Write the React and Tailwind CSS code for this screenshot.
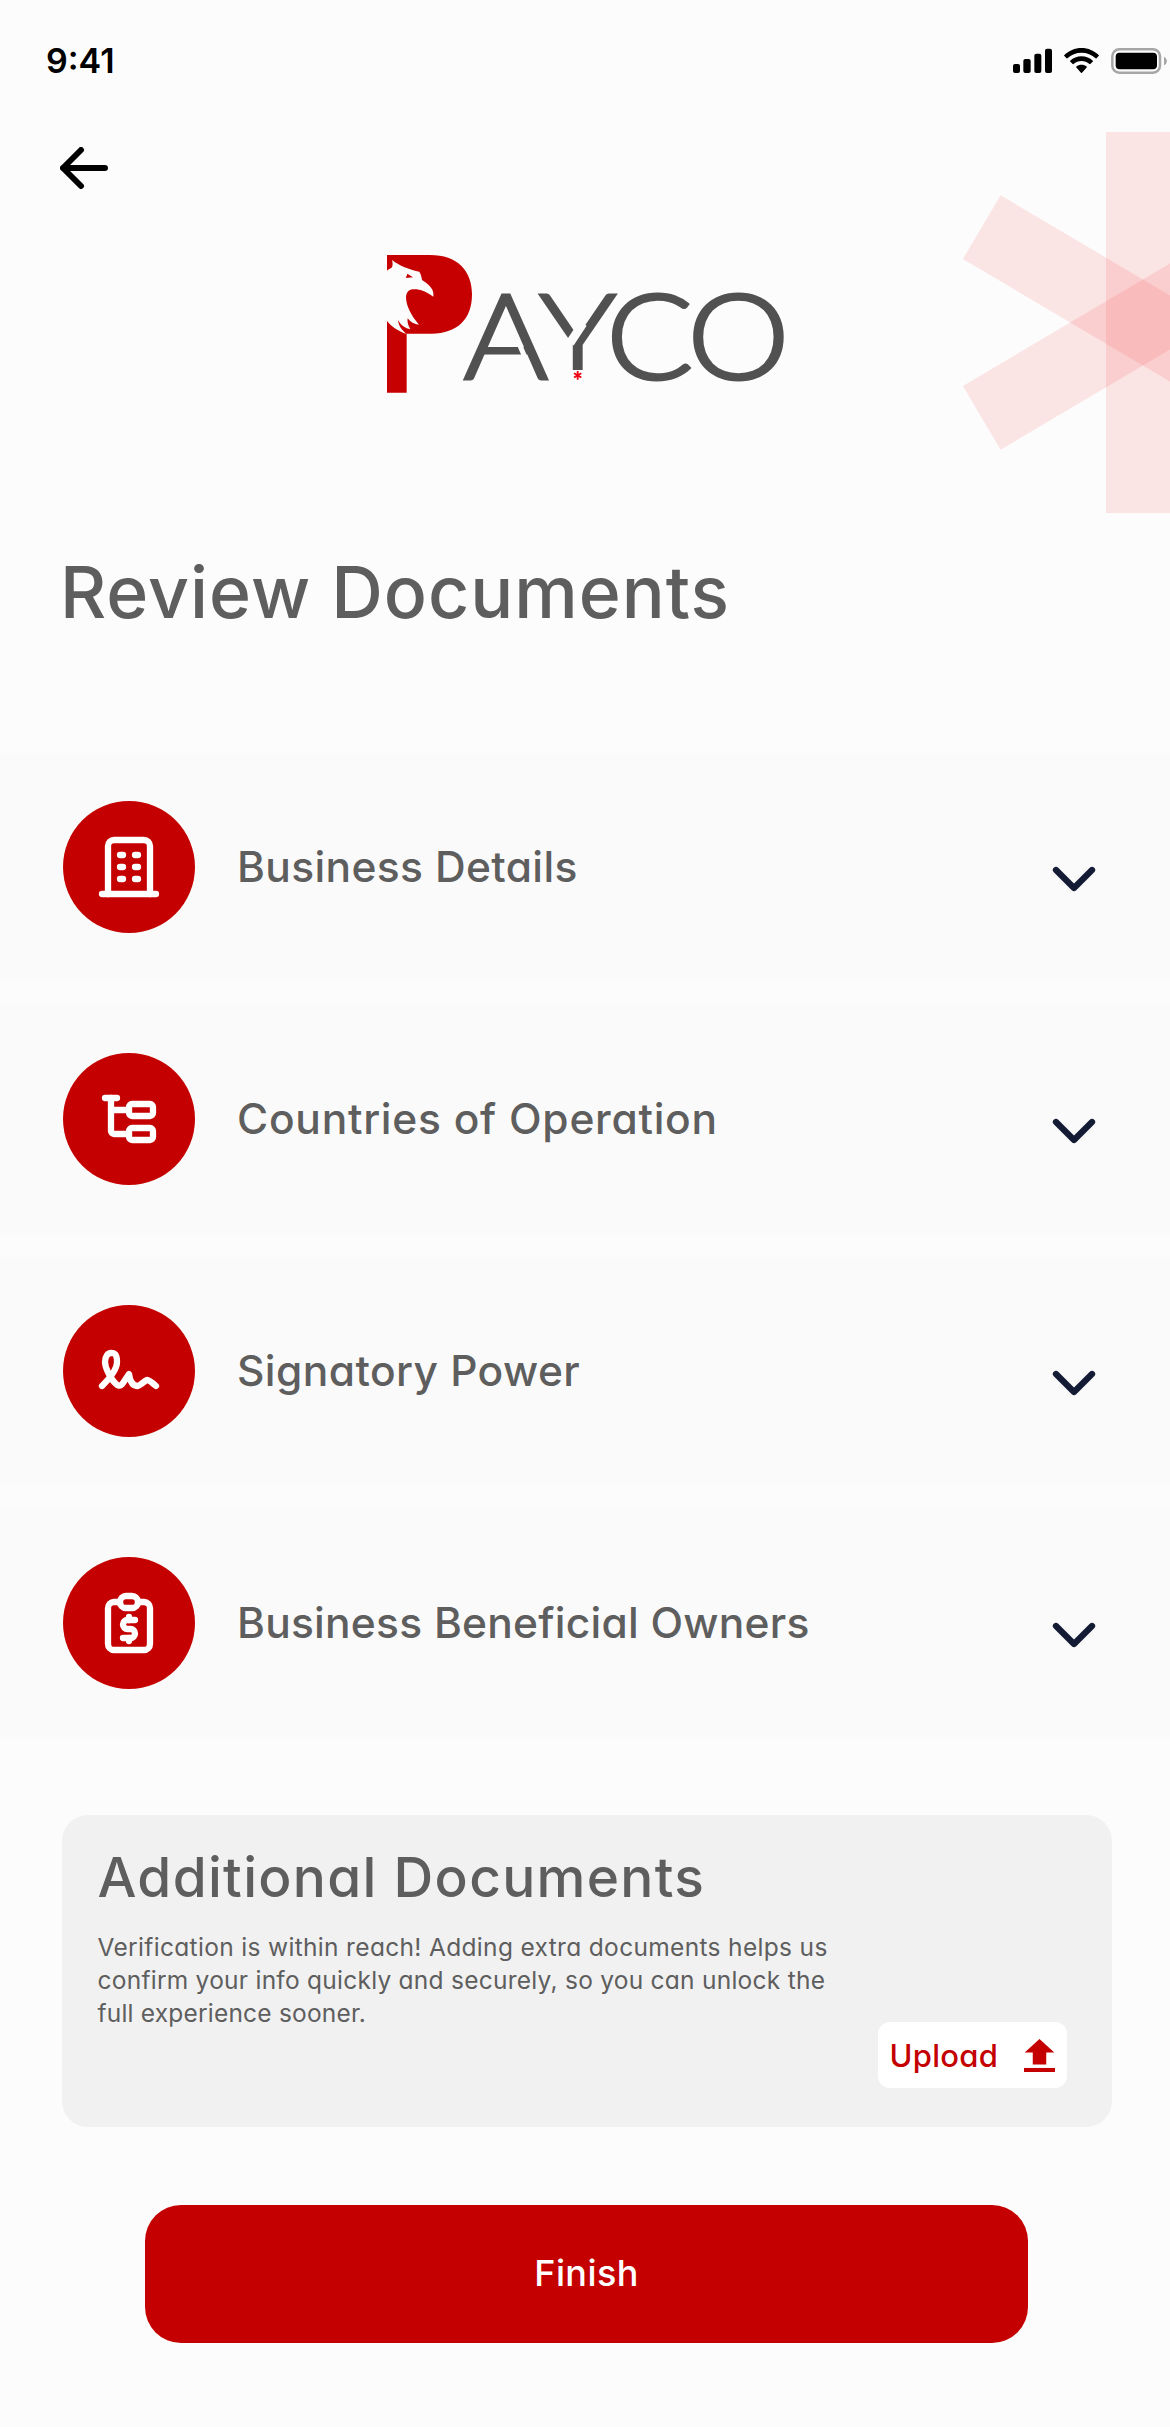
import React from 'react';

const iconProps = {
  viewBox: '0 0 24 24',
  fill: 'none',
  stroke: 'currentColor',
  strokeWidth: 2.1,
  strokeLinecap: 'round',
  strokeLinejoin: 'round',
  className: 'size-[72px]',
};

const BuildingIcon = () => (
  <svg {...iconProps}>
    <path d="M3 21h18" />
    <path d="M5 21V5a2 2 0 0 1 2-2h10a2 2 0 0 1 2 2v16" />
    <path d="M9 8h1M9 12h1M9 16h1M14 8h1M14 12h1M14 16h1" />
  </svg>
);

const TreeIcon = () => (
  <svg {...iconProps}>
    <path d="M4 5h4" />
    <path d="M6 5v11a1 1 0 0 0 1 1h5" />
    <path d="M6 9h6" />
    <rect x="12" y="7" width="8" height="4" rx="1" />
    <rect x="12" y="15" width="8" height="4" rx="1" />
  </svg>
);

const SignatureIcon = () => (
  <svg {...iconProps}>
    <path d="M3 17c3.333-3.333 5-6 5-8c0-3-1-3-2-3s-2.032 1.085-2 3c.034 2.048 1.658 4.877 2.5 6c1.5 2 2.5 2.5 3.5 1l2-3c.333 2.667 1.333 4 3 4c.53 0 2.639-2 3-2c.517 0 1.517.667 3 2" />
  </svg>
);

const ClipboardDollarIcon = () => (
  <svg {...iconProps}>
    <path d="M9 5H7a2 2 0 0 0-2 2v12a2 2 0 0 0 2 2h10a2 2 0 0 0 2-2V7a2 2 0 0 0-2-2h-2" />
    <rect x="9" y="3" width="6" height="4" rx="2" />
    <path d="M14 11h-2.5a1.5 1.5 0 0 0 0 3h1a1.5 1.5 0 0 1 0 3H10" />
    <path d="M12 17v1m0-8v1" />
  </svg>
);

const sections = [
  { title: 'Business Details', icon: BuildingIcon, tracking: 'tracking-[0.36px]' },
  { title: 'Countries of Operation', icon: TreeIcon, tracking: 'tracking-[0.74px]' },
  { title: 'Signatory Power', icon: SignatureIcon, tracking: 'tracking-[0.42px]' },
  { title: 'Business Beneficial Owners', icon: ClipboardDollarIcon, tracking: 'tracking-[0.24px]' },
];

const StatusBar = () => (
  <div className="flex h-[120px] items-center justify-between pl-[46px] pr-[3px]">
    <span className="pt-[1px] text-[34px] font-semibold leading-none text-black">9:41</span>
    <div className="flex items-center gap-[12px] pt-[2px]">
      {/* Signal */}
      <svg viewBox="162 84 117 78" className="h-[26px] w-[39px]">
        <rect x="162" y="132" width="21" height="27" rx="6" />
        <rect x="193" y="117" width="22" height="42" rx="6" />
        <rect x="226" y="101" width="21" height="58" rx="6" />
        <rect x="258" y="86" width="21" height="73" rx="6" />
      </svg>
      {/* Wifi */}
      <svg viewBox="314 84 105 78" className="h-[26px] w-[35px]">
        <path d="M366.500 84c20 0 38 8 52 21.500q1 1 0 2l-7 7.500q-1.500 1-2.500 0c-12-11-26-17-42.500-17s-30.500 6-42.500 17q-1 1-2.500 0l-7-7.500q-1-1 0-2c14-13.500 32-21.500 52-21.500z" />
        <path d="M366.500 109c13 0 25 5 34 13q1.500 1.200 0 2.500l-7.500 7.500q-1.200 1-2.500 0c-7-6-15-9-24-9s-17 3-24 9q-1.300 1-2.500 0l-7.500-7.500q-1.500-1.300 0-2.500c9-8 21-13 34-13z" />
        <path d="M366.500 134c6 0 11 2 15.500 5.500q1.500 1.300 0 2.700l-14 15.800q-1.500 1.500-3 0l-14-15.800q-1.500-1.400 0-2.700c4.500-3.500 9.500-5.500 15.500-5.500z" />
      </svg>
      {/* Battery */}
      <svg viewBox="453 84 168 78" className="h-[26px] w-[56px]">
        <rect x="457" y="88" width="143" height="70" rx="21" fill="none" stroke="#a6a6a6" strokeWidth="7.500" />
        <rect x="467" y="98" width="124" height="50" rx="12" />
        <path d="M612 110c5 2 8.500 7 8.500 13s-3.500 11-8.500 13z" fill="#a6a6a6" />
      </svg>
    </div>
  </div>
);

/* Three translucent bars crossing each other, cut off by the screen edge */
const Asterisk = () => (
  <svg
    viewBox="0 0 230 420"
    className="pointer-events-none absolute right-0 top-[110px] h-[420px] w-[230px]"
    fill="#f81010"
    fillOpacity="0.1"
  >
    <rect x="166" y="22" width="74" height="381" />
    <rect x="166" y="25.200" width="74" height="374.600" transform="rotate(59.4 203 212.5)" />
    <rect x="166" y="25.200" width="74" height="374.600" transform="rotate(-59.4 203 212.5)" />
  </svg>
);

const Logo = () => (
  <svg viewBox="0 0 1290 510" className="ml-[370px] h-[170px] w-[430px]">
    {/* Eagle emblem */}
    <path
      fill="#c60000"
      d="M51 45H180C262 45 306 92 306 163C306 236 264 281 184 281H110V458H51V243C64 259 84 274 110 282C95 270 85 256 84 240C92 255 106 266 121 267C114 256 111 246 113 235C121 246 133 253 147 254C122 224 108 196 108 170C110 150 124 146 140 148C160 151 176 160 190 170C193 150 182 137 156 120C155 110 152 102 148 95C122 90 88 78 66 60C69 70 68 78 66 82C61 86 55 88 51 92Z"
    />
    <path fill="#c60000" d="M112 101L129 112L107 114C109 110 111 106 112 101Z" />
    {/* Wordmark */}
    <text
      x="374 571.500 770 1014"
      y="416"
      transform="scale(1.090 1)"
      textAnchor="middle"
      fontFamily="Lato, sans-serif"
      fontWeight="300"
      fontSize="356"
      fill="#515151"
      stroke="#515151"
      strokeWidth="9"
    >
      AYCO
    </text>
    {/* Gaps in the crossbar and in the left arm */}
    <path d="M449.500 316L464 350" stroke="#fcfcfc" strokeWidth="15" />
    <path d="M639 250L600 309" stroke="#fcfcfc" strokeWidth="26" />
    <rect x="600" y="390" width="46" height="36" fill="#fcfcfc" />
    <path d="M623 393V419M612 399.500L634 412.500M612 412.500L634 399.500" stroke="#f00010" strokeWidth="5.500" />
  </svg>
);

const SectionRow = ({ title, icon: Icon, tracking }) => (
  <button className="flex h-[228px] w-full items-center bg-[#fafafa] pl-[63px] pr-[60px] text-left">
    <span className="flex size-[132px] shrink-0 items-center justify-center rounded-full bg-[#c40000] text-white">
      <Icon />
    </span>
    <span className={`ml-[42px] flex-1 text-[42.500px] font-medium leading-none text-[#5e5e5e] ${tracking}`}>
      {title}
    </span>
    <svg
      viewBox="0 0 24 24"
      className="mt-[24px] size-[72px] text-[#141b34]"
      fill="none"
      stroke="currentColor"
      strokeWidth="2.1"
      strokeLinecap="round"
      strokeLinejoin="round"
    >
      <path d="M6 9l6 6l6-6" />
    </svg>
  </button>
);

const UploadCard = () => (
  <section className="ml-[61.500px] mt-[78px] flex h-[312px] w-[1050px] justify-between rounded-[26px] bg-[#f1f1f1] pl-[36px] pr-[45px]">
    <div className="pt-[36px] text-[#5e5e5e]">
      <h2 className="whitespace-nowrap text-[55px] font-medium leading-[52px] tracking-[1.300px]">Additional Documents</h2>
      <p className="mt-[28px] whitespace-nowrap text-[24.500px] leading-[33px]">
        <span className="block tracking-[0.33px]">Verification is within reach! Adding extra documents helps us</span>
        <span className="block tracking-[0.25px]">confirm your info quickly and securely, so you can unlock the</span>
        <span className="block tracking-[0.2px]">full experience sooner.</span>
      </p>
    </div>
    <button className="mb-[39px] flex h-[66px] w-[189px] items-center justify-between self-end rounded-[12px] bg-white pl-[12px] pr-[12px] text-[#c40000]">
      <span className="text-[31px] font-medium leading-none tracking-[0.3px]">Upload</span>
      <svg viewBox="553 176 92 98" className="h-[33px] w-[31px]" fill="currentColor">
        <path d="M599 176L643 216H619V252H579V216H555Z" />
        <rect x="553" y="262" width="92" height="12" />
      </svg>
    </button>
  </section>
);

const App = () => {
  return (
    <main
      className="relative h-[2427px] w-[1170px] overflow-hidden bg-[#fcfcfc] font-['Inter',sans-serif]"
      style={{ fontFeatureSettings: '"cv11"' }}
    >
      <Asterisk />
      <StatusBar />

      <header>
        <button className="ml-[60px] flex h-[96px] items-center">
          <svg
            viewBox="0 0 48 42"
            className="h-[42px] w-[48px]"
            fill="none"
            stroke="#000"
            strokeWidth="6"
            strokeLinecap="round"
            strokeLinejoin="round"
          >
            <path d="M45 21H3M21 3L3 21L21 39" />
          </svg>
        </button>
        <div className="pt-[24px]">
          <Logo />
        </div>
        <h1 className="ml-[60px] mt-[148px] text-[71.500px] font-medium leading-[68px] tracking-[1px] text-[#5e5e5e]">
          Review Documents
        </h1>
      </header>

      <div className="mt-[127px] flex flex-col gap-[24px]">
        {sections.map((section) => (
          <SectionRow key={section.title} {...section} />
        ))}
      </div>

      <UploadCard />

      <button className="ml-[145px] mt-[78px] flex h-[138px] w-[883px] items-center justify-center rounded-[36px] bg-[#c40000] pb-[2px] text-[36px] font-medium tracking-[0.4px] text-white">
        Finish
      </button>
    </main>
  );
};

export default App;
